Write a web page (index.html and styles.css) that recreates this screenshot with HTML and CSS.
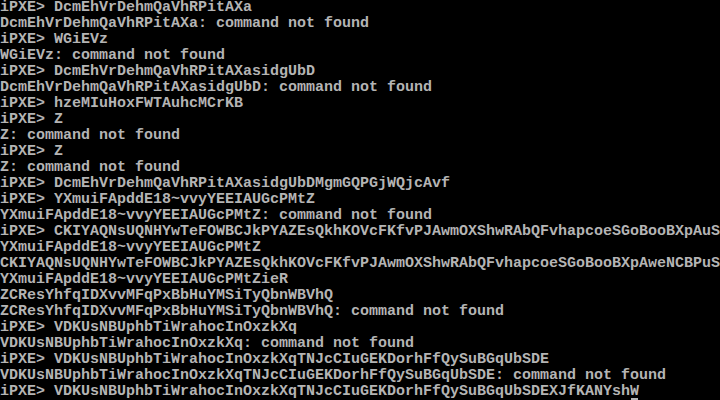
FILE: index.html
```
<!DOCTYPE html>
<html>
<head>
<meta charset="utf-8">
<link rel="stylesheet" href="styles.css">
</head>
<body>
<div class="screen">
<div class="row">iPXE&gt; DcmEhVrDehmQaVhRPitAXa</div>
<div class="row">DcmEhVrDehmQaVhRPitAXa: command not found</div>
<div class="row">iPXE&gt; WGiEVz</div>
<div class="row">WGiEVz: command not found</div>
<div class="row">iPXE&gt; DcmEhVrDehmQaVhRPitAXasidgUbD</div>
<div class="row">DcmEhVrDehmQaVhRPitAXasidgUbD: command not found</div>
<div class="row">iPXE&gt; hzeMIuHoxFWTAuhcMCrKB</div>
<div class="row">iPXE&gt; Z</div>
<div class="row">Z: command not found</div>
<div class="row">iPXE&gt; Z</div>
<div class="row">Z: command not found</div>
<div class="row">iPXE&gt; DcmEhVrDehmQaVhRPitAXasidgUbDMgmGQPGjWQjcAvf</div>
<div class="row">iPXE&gt; YXmuiFApddE18~vvyYEEIAUGcPMtZ</div>
<div class="row">YXmuiFApddE18~vvyYEEIAUGcPMtZ: command not found</div>
<div class="row">iPXE&gt; CKIYAQNsUQNHYwTeFOWBCJkPYAZEsQkhKOVcFKfvPJAwmOXShwRAbQFvhapcoeSGoBooBXpAuS</div>
<div class="row">YXmuiFApddE18~vvyYEEIAUGcPMtZ</div>
<div class="row">CKIYAQNsUQNHYwTeFOWBCJkPYAZEsQkhKOVcFKfvPJAwmOXShwRAbQFvhapcoeSGoBooBXpAweNCBPuS</div>
<div class="row">YXmuiFApddE18~vvyYEEIAUGcPMtZieR</div>
<div class="row">ZCResYhfqIDXvvMFqPxBbHuYMSiTyQbnWBVhQ</div>
<div class="row">ZCResYhfqIDXvvMFqPxBbHuYMSiTyQbnWBVhQ: command not found</div>
<div class="row">iPXE&gt; VDKUsNBUphbTiWrahocInOxzkXq</div>
<div class="row">VDKUsNBUphbTiWrahocInOxzkXq: command not found</div>
<div class="row">iPXE&gt; VDKUsNBUphbTiWrahocInOxzkXqTNJcCIuGEKDorhFfQySuBGqUbSDE</div>
<div class="row">VDKUsNBUphbTiWrahocInOxzkXqTNJcCIuGEKDorhFfQySuBGqUbSDE: command not found</div>
<div class="row">iPXE&gt; VDKUsNBUphbTiWrahocInOxzkXqTNJcCIuGEKDorhFfQySuBGqUbSDEXJfKANYsh<span class="cur">W</span></div>
</div>
</body>
</html>
```
FILE: styles.css
```
html, body {
  margin: 0;
  padding: 0;
  background: #000;
}
.screen {
  width: 720px;
  height: 400px;
  overflow: hidden;
  background: #000;
  color: #b4b4b4;
  font-family: "Liberation Mono", "DejaVu Sans Mono", monospace;
  font-weight: bold;
  font-size: 15px;
  line-height: 16px;
}
.row {
  height: 16px;
  white-space: pre;
}
.cur {
  display: inline-block;
  width: 9px;
  height: 16px;
  vertical-align: top;
  background: linear-gradient(#b4b4b4, #b4b4b4) 1px 14px / 7px 2px no-repeat;
}
```
